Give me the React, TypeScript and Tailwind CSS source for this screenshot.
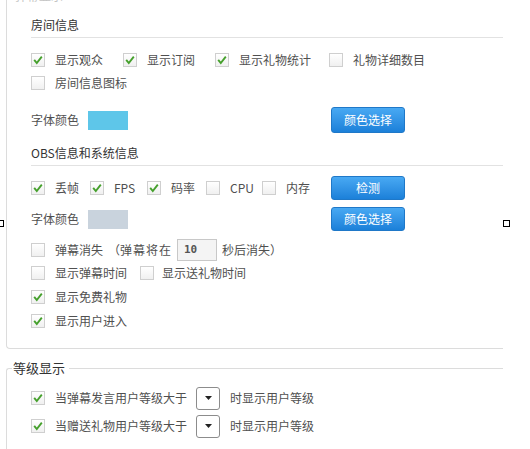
import React from "react";

function Check({ on }: { on?: boolean }) {
  return (
    <span className="flex h-[14px] w-[14px] shrink-0 items-center justify-center border border-[#cfcfcf] bg-gradient-to-b from-white to-[#f0f0f0]">
      {on && (
        <svg width="10" height="10" viewBox="0 0 10 10" aria-hidden>
          <path d="M1.2 4.8 3.8 8 8.8 1.6" fill="none" stroke="#45a02c" strokeWidth="1.9" />
        </svg>
      )}
    </span>
  );
}

function Opt({ label, on, className = "", gap = "ml-[10px]" }: { label: string; on?: boolean; className?: string; gap?: string }) {
  return (
    <div className={`flex shrink-0 items-center ${className}`}>
      <Check on={on} />
      <span className={`${gap} leading-none whitespace-nowrap`}>{label}</span>
    </div>
  );
}

function BlueButton({ children, className = "" }: { children: React.ReactNode; className?: string }) {
  return (
    <button
      type="button"
      className={`flex w-[74px] items-center justify-center rounded-[3px] border border-[#1f78c8] bg-gradient-to-b from-[#48a9f3] to-[#1b80d9] text-[12px] leading-none text-white ${className}`}
    >
      {children}
    </button>
  );
}

function Dropdown() {
  return (
    <div className="flex h-[23px] w-[24px] shrink-0 items-center justify-center rounded-[3px] border border-[#8c8c8c] bg-white">
      <svg width="7" height="4" viewBox="0 0 7 4" aria-hidden>
        <path d="M0 0h7L3.5 4z" fill="#222" />
      </svg>
    </div>
  );
}

export default function App() {
  return (
    <div className="relative h-[449px] w-[530px] overflow-hidden bg-white font-['Noto_Sans_CJK_SC','Noto_Sans',sans-serif] text-[12px] text-[#505050]">
      {/* upper group, its legend scrolled mostly out of view */}
      <div className="-mt-[12px] ml-[6px] flex w-[497px] flex-col rounded-bl-[4px] border-b border-l border-[#dcdcdc] pb-[17px]">
        <div className="flex h-[16px] items-center pl-[8px] text-[12px] text-[#c4c4c4]">弹幕显示</div>

        <div className="flex flex-col pl-[24px]">
          <div className="mt-[13px] flex h-[16px] items-center text-[12px] text-[#333]">房间信息</div>
          <div className="mt-[4px] h-px bg-[#e2e2e2]" />

          <div className="mt-[12px] flex h-[20px] items-center">
            <Opt label="显示观众" on className="w-[92px]" />
            <Opt label="显示订阅" on className="w-[92px]" />
            <Opt label="显示礼物统计" on className="w-[114px]" />
            <Opt label="礼物详细数目" />
          </div>
          <div className="mt-[3px] flex h-[20px] items-center">
            <Opt label="房间信息图标" />
          </div>

          <div className="mt-[14px] flex h-[26px] items-center">
            <span className="w-[57px] leading-none">字体颜色</span>
            <span className="h-[19px] w-[40px] bg-[#5ec6e9]" />
            <BlueButton className="ml-[203px] h-[26px]">颜色选择</BlueButton>
          </div>

          <div className="mt-[12px] flex h-[16px] items-center text-[12px] text-[#333]">OBS信息和系统信息</div>
          <div className="mt-[4px] h-px bg-[#e2e2e2]" />

          <div className="mt-[10px] flex h-[24px] items-center">
            <Opt label="丢帧" on className="w-[59px]" />
            <Opt label="FPS" on className="w-[57px]" />
            <Opt label="码率" on className="w-[59px]" />
            <Opt label="CPU" className="w-[56px]" />
            <Opt label="内存" className="w-[69px]" />
            <BlueButton className="h-[24px]">检测</BlueButton>
          </div>

          <div className="mt-[7px] flex h-[24px] items-center">
            <span className="w-[57px] leading-none">字体颜色</span>
            <span className="h-[19px] w-[40px] bg-[#c9d3dd]" />
            <BlueButton className="ml-[203px] h-[24px]">颜色选择</BlueButton>
          </div>

          <div className="mt-[8px] flex h-[22px] items-center">
            <Opt label="弹幕消失" className="w-[77px]" />
            <span className="w-[69px] whitespace-nowrap leading-none">
              （<span className="tracking-[1px]">弹幕将在</span>
            </span>
            <div className="flex h-[22px] w-[40px] items-center border border-[#c8c8c8] bg-[#f4f4f4] pl-[6px] font-['DejaVu_Sans_Mono',monospace] text-[11px] font-bold text-[#555]">
              10
            </div>
            <span className="ml-[5px] leading-none">秒后消失）</span>
          </div>

          <div className="mt-[2px] flex h-[20px] items-center">
            <Opt label="显示弹幕时间" className="w-[109px]" />
            <Opt label="显示送礼物时间" gap="ml-[8px]" />
          </div>
          <div className="mt-[4px] flex h-[20px] items-center">
            <Opt label="显示免费礼物" on />
          </div>
          <div className="mt-[4px] flex h-[20px] items-center">
            <Opt label="显示用户进入" on />
          </div>
        </div>
      </div>

      {/* level group */}
      <div className="mt-[12px] ml-[6px] flex w-[497px] flex-col">
        <div className="flex h-[14px]">
          <span className="h-[7px] w-[6px] self-end rounded-tl-[3px] border-t border-l border-[#dcdcdc]" />
          <span className="px-[1px] text-[13px] leading-[14px] text-[#333]">等级显示</span>
          <span className="ml-[3px] h-[7px] flex-1 self-end border-t border-[#dcdcdc]" />
        </div>
        <div className="flex h-[80px] flex-col border-l border-[#dcdcdc] pl-[24px]">
          <div className="mt-[11px] flex h-[24px] items-center">
            <Opt label="当弹幕发言用户等级大于" on className="w-[165px]" />
            <Dropdown />
            <span className="ml-[10px] leading-none">时显示用户等级</span>
          </div>
          <div className="mt-[4px] flex h-[24px] items-center">
            <Opt label="当赠送礼物用户等级大于" on className="w-[165px]" />
            <Dropdown />
            <span className="ml-[10px] leading-none">时显示用户等级</span>
          </div>
        </div>
      </div>

      {/* resize handles */}
      <span className="absolute top-[220px] -left-[3px] h-[7px] w-[7px] border border-black bg-white" />
      <span className="absolute top-[220px] left-[503px] h-[7px] w-[7px] border border-black bg-white" />
    </div>
  );
}
